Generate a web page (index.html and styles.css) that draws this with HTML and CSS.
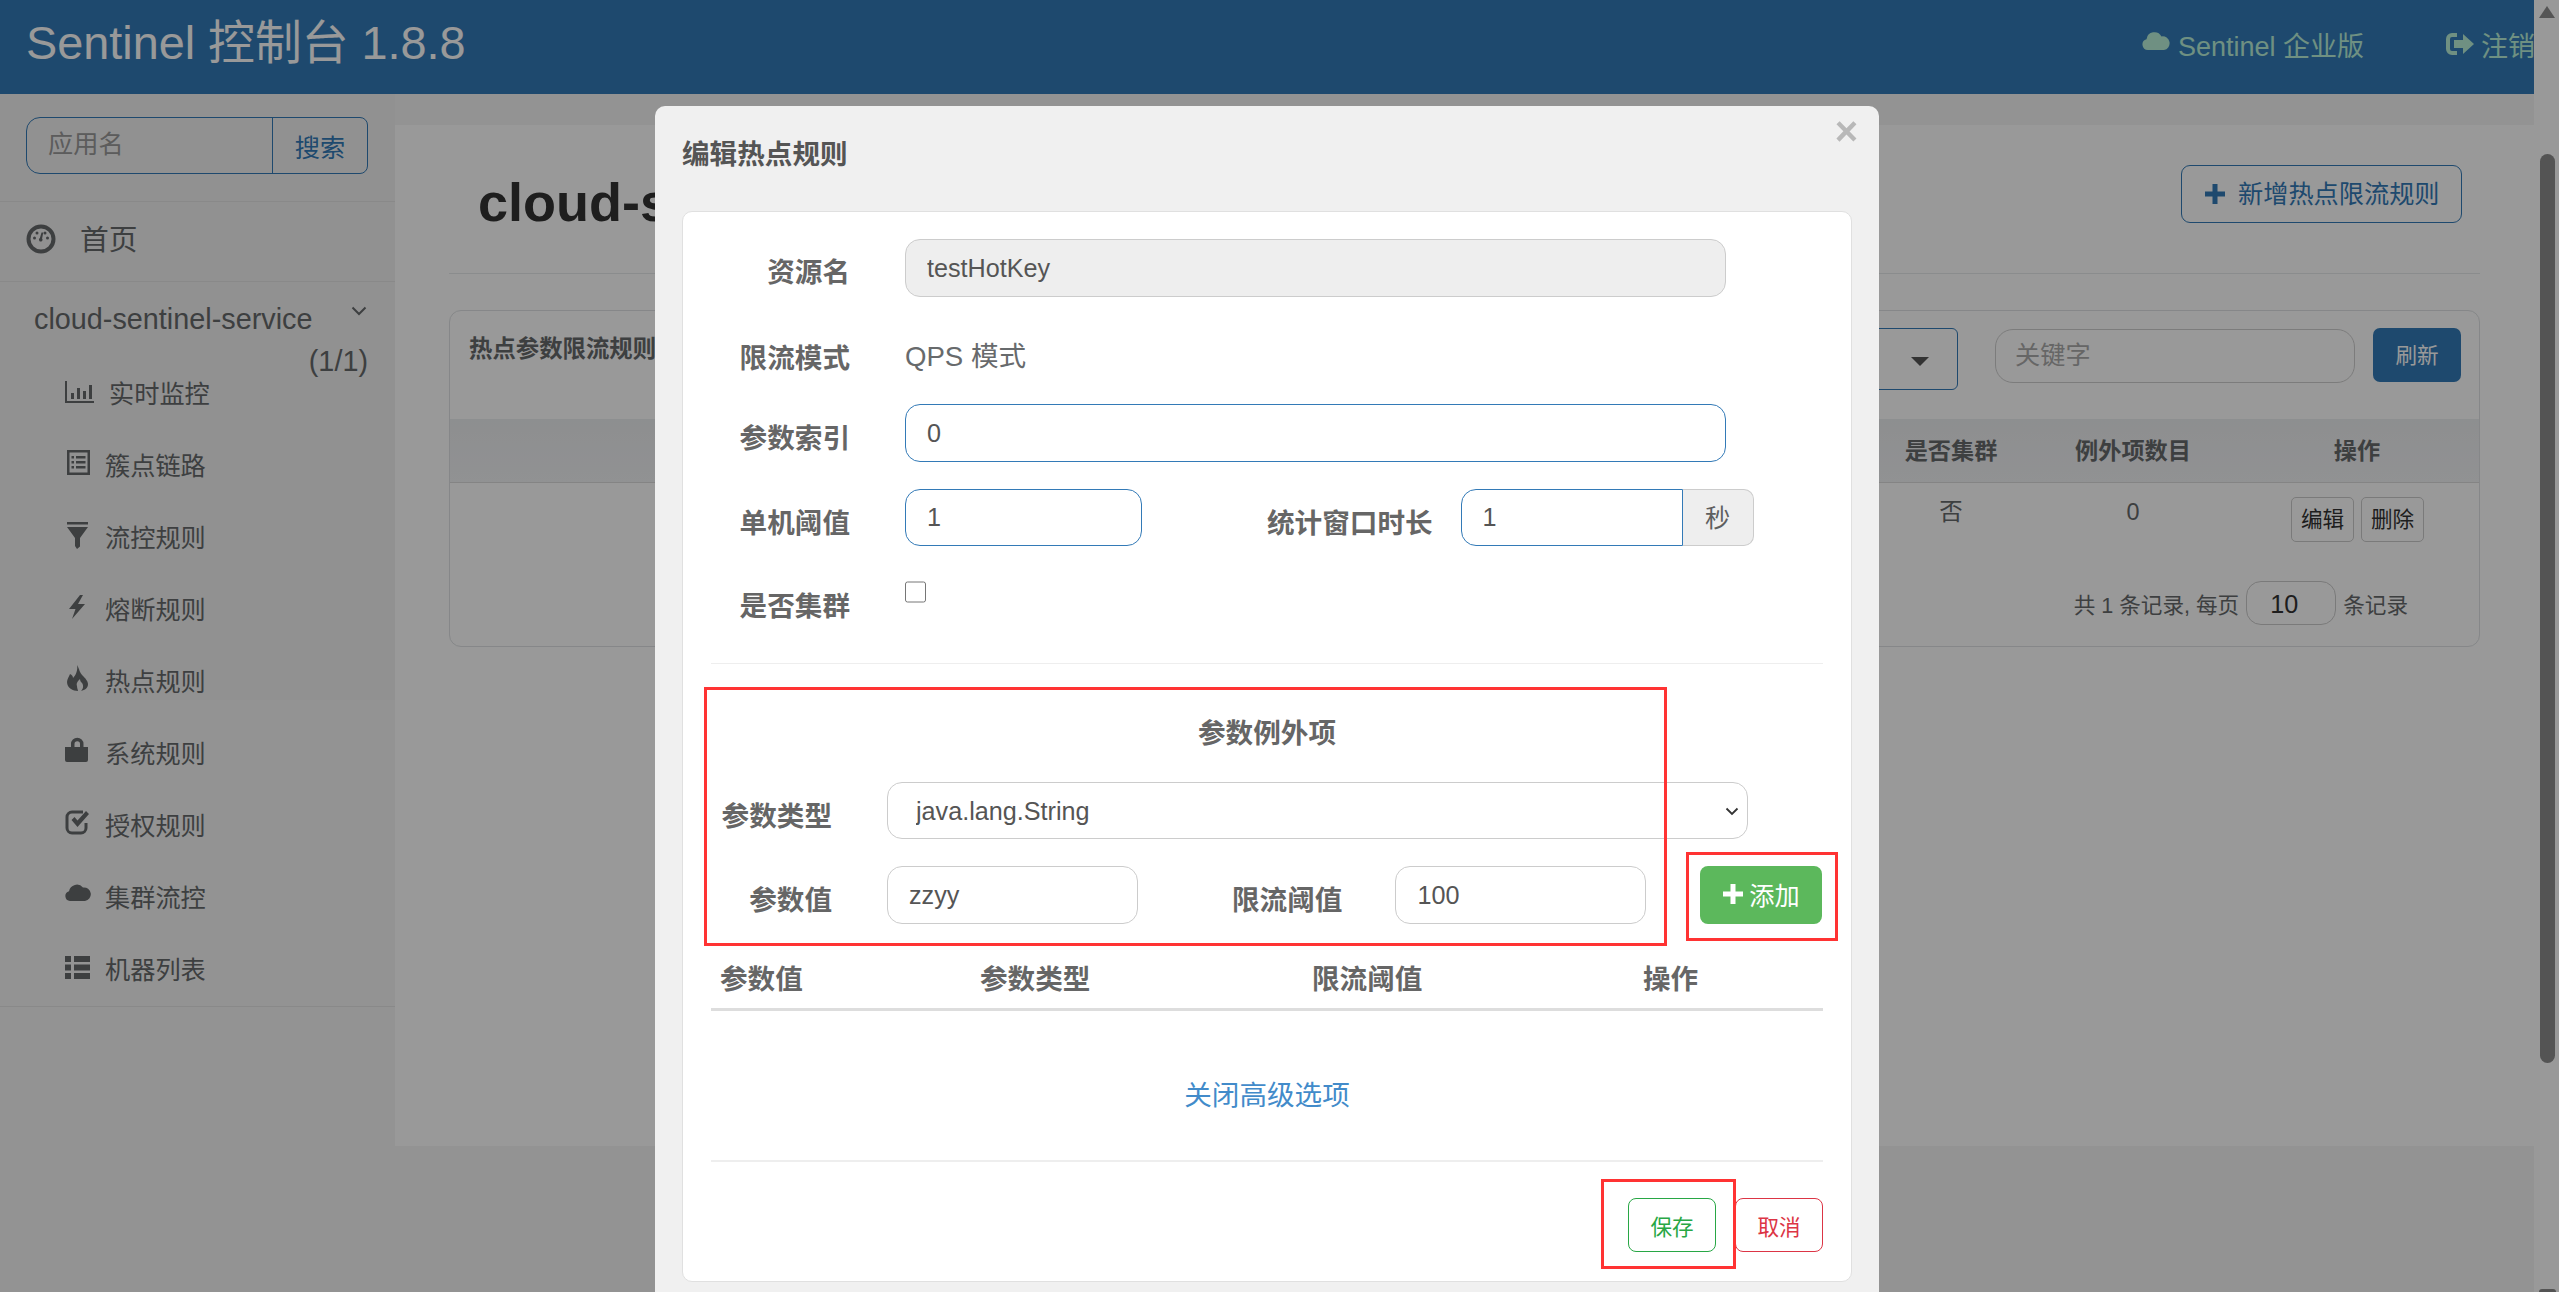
FILE: index.html
```html
<!DOCTYPE html>
<html lang="zh-CN">
<head>
<meta charset="utf-8">
<title>Sentinel 控制台</title>
<link rel="stylesheet" href="styles.css">
</head>
<body>
<div class="app">
  <div class="page">
    <header class="navbar">
      <div class="brand">Sentinel 控制台 1.8.8</div>
      <nav class="nav-right">
        <a class="nav-link"><svg class="nav-cloud" viewBox="0 0 28 18"><path d="M6 18a5.500 5.500 0 0 1-1.500-10.800A8 8 0 0 1 19.500 4.500 6.800 6.800 0 0 1 22 18Z"/></svg>Sentinel 企业版</a>
        <a class="nav-link nav-logout"><svg class="nav-out" viewBox="0 0 30 24"><path d="M12 1H7a6 6 0 0 0-6 6v10a6 6 0 0 0 6 6h5v-4H7a2 2 0 0 1-2-2V7a2 2 0 0 1 2-2h5Z"/><path d="M9 8h9V2l11 10-11 10v-6H9Z"/></svg><span class="clip">注销</span></a>
      </nav>
    </header>
    <div class="layout">
      <aside class="sidebar">
        <div class="search-wrap">
          <div class="search-group">
            <input class="search-input" placeholder="应用名">
            <span class="search-btn">搜索</span>
          </div>
        </div>
        <div class="home-row">
          <svg class="home-icon" viewBox="0 0 30 30"><circle cx="15" cy="15" r="12.500" fill="none" stroke-width="4"/><circle cx="8.500" cy="14" r="1.500"/><circle cx="11" cy="9" r="1.500"/><circle cx="19" cy="9" r="1.500"/><circle cx="21.500" cy="14" r="1.500"/><path d="M15.500 8.500l1.800 0-1.200 6a1.800 1.800 0 1 1-2.200-.4Z"/></svg>
          <span>首页</span>
        </div>
        <div class="service">
          <div class="service-head">
            <span class="service-name">cloud-sentinel-service</span>
            <svg class="chevron" viewBox="0 0 16 10"><path d="M1.500 1.500L8 8l6.500-6.500" fill="none" stroke-width="2"/></svg>
            <span class="service-count">(1/1)</span>
          </div>
          <ul class="menu">
            <li class="menu-item"><svg class="ic ic-wide" viewBox="0 0 44 30"><path d="M0 4h2v20h27v2H0Z"/><path d="M6 16h3v6H6ZM12 11h3v11h-3ZM18 14h3v8h-3ZM24 8h3v14h-3Z"/></svg>实时监控</li>
            <li class="menu-item"><svg class="ic" viewBox="0 0 40 30"><path fill-rule="evenodd" d="M2 1h23v25H2ZM4.500 3.500v20h18v-20Z"/><path d="M6.500 7h2.500v2.500H6.500ZM11 7h9.500v2.500H11ZM6.500 12h2.500v2.500H6.500ZM11 12h9.500v2.500H11ZM6.500 17h2.500v2.500H6.500ZM11 17h9.500v2.500H11Z"/></svg>簇点链路</li>
            <li class="menu-item"><svg class="ic" viewBox="0 0 40 30"><path d="M2 1h21v2.500H2ZM2 6h21l-8 11v8.500l-3 2.500-2-3V17Z"/></svg>流控规则</li>
            <li class="menu-item"><svg class="ic" viewBox="0 0 40 30"><path d="M15 2L4 16h6.500L7 26 20 11h-7L18 2Z"/></svg>熔断规则</li>
            <li class="menu-item"><svg class="ic" viewBox="0 0 40 30"><path fill-rule="evenodd" d="M12 0c3 5 2 7 6 11 2 2 5 5 5 8 0 4-3 6-7 7 2-2 3-5 1-8-1-1-2-2-2-4-2 2-4 4-3 7 0 2 1 4 1 5-5 0-11-3-11-9 0-3 2-5 3-8 2 1 3 2 3 4 3-3 5-8 4-13Z"/></svg>热点规则</li>
            <li class="menu-item"><svg class="ic" viewBox="0 0 40 30"><path fill-rule="evenodd" d="M6 10V7a6 6 0 0 1 12.500 0v3H23v13a2 2 0 0 1-2 2H2a2 2 0 0 1-2-2V10ZM9.500 10h5.500V7a2.700 2.700 0 0 0-5.500 0Z"/></svg>系统规则</li>
            <li class="menu-item"><svg class="ic" viewBox="0 0 40 30"><path fill="none" stroke-width="3" d="M18 3H7a5 5 0 0 0-5 5v11a5 5 0 0 0 5 5h9a5 5 0 0 0 5-5v-5"/><path d="M6.500 11l3-3 3 3.500L21 2l3 3-11.500 13Z"/></svg>授权规则</li>
            <li class="menu-item"><svg class="ic" viewBox="0 0 40 30"><path d="M5 20a5 5 0 0 1-1-9.800A8 8 0 0 1 18 6.500 6.500 6.500 0 0 1 20 20Z"/></svg>集群流控</li>
            <li class="menu-item"><svg class="ic" viewBox="0 0 40 30"><path d="M0 3h6v6H0ZM9 3h16v6H9ZM0 11.500h6v6H0ZM9 11.500h16v6H9ZM0 20h6v6H0ZM9 20h16v6H9Z"/></svg>机器列表</li>
          </ul>
        </div>
      </aside>
      <main class="main">
        <div class="page-head">
          <h1 class="page-title">cloud-sentinel-service</h1>
          <a class="btn-outline"><svg class="plus" viewBox="0 0 20 20"><path d="M7.500 0h5v7.500H20v5h-7.500V20h-5v-7.500H0v-5h7.500Z"/></svg>新增热点限流规则</a>
        </div>
        <section class="panel">
          <div class="panel-head">
            <strong class="panel-title">热点参数限流规则</strong>
            <div class="machine-select"><i class="caret"></i></div>
            <input class="keyword" placeholder="关键字">
            <a class="btn-refresh">刷新</a>
          </div>
          <div class="tbl-head">
            <span></span><span>是否集群</span><span>例外项数目</span><span>操作</span>
          </div>
          <div class="tbl-row">
            <span></span><span>否</span><span>0</span>
            <span class="tbl-actions"><a class="btn-mini">编辑</a><a class="btn-mini">删除</a></span>
          </div>
          <div class="pager">共 1 条记录, 每页<input class="pager-input" value="10">条记录</div>
        </section>
      </main>
    </div>
  </div>
  <div class="scrollbar">
    <i class="sb-up"></i>
    <i class="sb-thumb"></i>
    <i class="sb-end"></i>
  </div>
</div>

<div class="backdrop"></div>

<div class="modal">
  <button class="close">×</button>
  <h3 class="modal-title">编辑热点规则</h3>
  <div class="dialog-card">
    <div class="row row-res">
      <label class="lbl">资源名</label>
      <input class="field field-full field-off" value="testHotKey" disabled>
    </div>
    <div class="row row-mode">
      <label class="lbl">限流模式</label>
      <span class="static">QPS 模式</span>
    </div>
    <div class="row row-index">
      <label class="lbl">参数索引</label>
      <input class="field field-full field-on" value="0">
    </div>
    <div class="row row-thresh">
      <label class="lbl">单机阈值</label>
      <input class="field field-short field-on" value="1">
      <label class="lbl lbl-window">统计窗口时长</label>
      <input class="field field-addon field-on" value="1"><span class="addon">秒</span>
    </div>
    <div class="row row-cluster">
      <label class="lbl">是否集群</label>
      <input class="check" type="checkbox">
    </div>
    <hr class="rule">
    <div class="exc-title">参数例外项</div>
    <div class="exc-row exc-type">
      <label class="lbl lbl-exc">参数类型</label>
      <div class="select-box">
        <select class="exc-select"><option>java.lang.String</option></select>
        <svg class="select-arrow" viewBox="0 0 14 9"><path d="M1.500 1.500L7 7l5.500-5.500" fill="none" stroke-width="1.800"/></svg>
      </div>
    </div>
    <div class="exc-row exc-vals">
      <label class="lbl lbl-exc">参数值</label>
      <input class="field field-exc" value="zzyy">
      <label class="lbl lbl-limit">限流阈值</label>
      <input class="field field-exc" value="100">
      <button class="btn-add"><svg class="plus-add" viewBox="0 0 20 20"><path d="M7.500 0h5v7.500H20v5h-7.500V20h-5v-7.500H0v-5h7.500Z"/></svg>添加</button>
    </div>
    <div class="exc-table">
      <span class="col-a">参数值</span><span class="col-b">参数类型</span><span class="col-c">限流阈值</span><span class="col-d">操作</span>
    </div>
    <div class="adv"><a class="adv-link">关闭高级选项</a></div>
    <div class="foot">
      <button class="btn-save">保存</button>
      <button class="btn-cancel">取消</button>
    </div>
  </div>
  <i class="mark mark-form"></i>
  <i class="mark mark-add"></i>
  <i class="mark mark-save"></i>
</div>
</body>
</html>
```
FILE: styles.css
```css
* { box-sizing: border-box; }
html, body { margin: 0; height: 100%; overflow: hidden; }
body {
  font-family: "Liberation Sans", "Noto Sans CJK SC", sans-serif;
  font-size: 25.2px;
  color: #676a6c;
  background: #fff;
}
input, select, button { font-family: inherit; }
svg { fill: currentColor; stroke: currentColor; stroke-width: 0; flex: none; }
a { display: inline-block; }

.app { display: flex; height: 1292px; }
.page { width: 2534px; display: flex; flex-direction: column; }

/* navbar */
.navbar { height: 94px; flex: none; background: #337ab7; display: flex; align-items: center; justify-content: space-between; overflow: hidden; }
.brand { padding-left: 26px; font-size: 46.800px; line-height: 84px; color: #fff; margin-bottom: 8px; }
.nav-right { display: flex; align-items: center; color: #b9f0d9; font-size: 27px; margin-bottom: 6px; }
.nav-link { display: flex; align-items: center; }
.nav-cloud { width: 28px; height: 18px; margin-right: 8px; margin-top: -6px; }
.nav-logout { margin-left: 81px; width: 89px; white-space: nowrap; overflow: hidden; }
.nav-out { width: 30px; height: 24px; margin-right: 6px; }
.clip { display: block; }

/* layout */
.layout { flex: 1; display: flex; background: #f6f6f6; }
.sidebar { width: 395px; flex: none; background: linear-gradient(#f2f2f2 606px, #f6f6f6 606px); }
.search-wrap { padding: 23px 26px 27px; height: 108px; border-bottom: 1px solid #e5e5e5; }
.search-group { width: 342px; height: 57px; display: flex; border: 1px solid #337ab7; border-radius: 14px 8px 8px 14px; }
.search-input { width: 245px; border: 0; background: none; outline: 0; padding: 0 0 2px 21px; font-size: 25.2px; color: #555; }
.search-input::placeholder { color: #999; }
.search-btn { flex: 1; border-left: 1px solid #337ab7; color: #337ab7; display: flex; align-items: center; justify-content: center; }
.home-row { height: 80px; display: flex; align-items: center; padding-left: 26px; font-size: 28.8px; border-bottom: 1px solid #e5e5e5; }
.home-row span { margin-left: 24px; padding-bottom: 8px; }
.home-icon { width: 30px; height: 30px; margin-top: -6px; }
.service { padding-top: 16px; border-bottom: 1px solid #e5e5e5; }
.service-head { position: relative; height: 58.400px; padding-left: 34px; font-size: 28.8px; line-height: 43px; }
.chevron { position: absolute; left: 351px; top: 8px; width: 16px; height: 10px; fill: none; }
.service-count { position: absolute; right: 27px; top: 42px; }
.menu { list-style: none; margin: 0; padding: 0 0 2px; }
.menu-item { height: 72px; display: flex; align-items: center; padding-left: 65px; }
.ic { width: 40px; height: 30px; }
.ic-wide { width: 44px; }

/* main */
.main { flex: 1; margin-top: 31px; height: 1021px; background: #fff; padding: 0 54px; }
.page-head { height: 149px; position: relative; border-bottom: 1px solid #e7eaec; display: flex; justify-content: space-between; }
.page-title { margin: 46px 0 0; padding-left: 29px; font-size: 54px; line-height: 62px; font-weight: 700; color: #333; }
.btn-outline { margin: 40px 18px 0 0; width: 281px; height: 58px; border: 1px solid #337ab7; border-radius: 9px; color: #337ab7; display: flex; align-items: center; padding: 0 0 4px 23px; }
.plus { width: 20px; height: 20px; margin-right: 13px; margin-top: 4px; }
.panel { margin-top: 36px; height: 337px; border: 1px solid #dfe2e4; border-radius: 12px; }
.panel-head { height: 108px; display: flex; align-items: flex-start; padding: 17px 18px 0 19px; position: relative; }
.panel-title { margin: 2px auto 0 0; font-size: 23.400px; color: #676a6c; }
.machine-select { width: 320px; height: 62px; border: 1px solid #337ab7; border-radius: 6px; display: flex; align-items: center; justify-content: flex-end; padding-right: 28px; }
.caret { border-top: 9px solid #555; border-left: 9px solid transparent; border-right: 9px solid transparent; margin-top: 4px; }
.keyword { margin: 1px 0 0 37px; width: 360px; height: 54px; border: 1px solid #cfcfcf; border-radius: 18px; padding: 0 19px 2px; font-size: 25.2px; background: none; outline: 0; }
.keyword::placeholder { color: #aaa; }
.btn-refresh { margin-left: 18px; width: 88px; height: 54px; border-radius: 7px; background: #337ab7; color: #fff; font-size: 21.600px; display: flex; align-items: center; justify-content: center; padding-bottom: 4px; }
.tbl-head, .tbl-row { display: grid; grid-template-columns: 1fr 160px 204px 244px; text-align: center; }
.tbl-head { height: 64px; align-items: center; background: linear-gradient(#eceef0, #f2f3f5); border-bottom: 1px solid #ddd; font-size: 23.200px; font-weight: 700; padding-bottom: 4px; }
.tbl-row { height: 100px; padding-top: 14px; font-size: 23.400px; line-height: 30px; }
.tbl-actions { display: flex; gap: 7px; justify-content: center; padding-left: 1px; }
.btn-mini { width: 63px; height: 45px; margin-top: 0; border: 1px solid #ccc; border-radius: 5px; font-size: 21.600px; color: #333; display: flex; align-items: center; justify-content: center; }
.pager { display: flex; align-items: center; justify-content: flex-end; padding-right: 71px; margin-top: -2px; font-size: 21.600px; gap: 7px; }
.pager-input { width: 90px; height: 44px; border: 1px solid #ccc; border-radius: 15px; padding: 2px 0 0 23px; font-size: 25.2px; color: #333; background: none; outline: 0; }

/* scrollbar */
.scrollbar { width: 25px; position: relative; background: #fff; }
.sb-up { position: absolute; left: 5px; top: 6px; border-bottom: 12px solid #8e8e8e; border-left: 8px solid transparent; border-right: 8px solid transparent; }
.sb-thumb { position: absolute; left: 6px; top: 154px; width: 15px; height: 909px; border-radius: 8px; background: #8c8c8c; }
.sb-end { position: absolute; left: 5px; top: 1289px; width: 17px; height: 3px; border-radius: 3px 3px 0 0; background: #8c8c8c; }

.backdrop { position: fixed; inset: 0; background: rgba(0, 0, 0, .4); }

/* modal */
.modal { position: absolute; left: 655px; top: 106px; width: 1224px; height: 1220px; background: #f0f0f0; border-radius: 10px; padding: 0 27px; color: #5f5f5f; }
.close { position: absolute; right: 21px; top: 2px; border: 0; background: none; font-size: 40px; line-height: 46px; font-weight: 700; color: #b8b8b8; padding: 0; }
.modal-title { margin: 0; height: 105px; padding-top: 29px; font-size: 27.6px; line-height: 40px; font-weight: 700; color: #555; }
.dialog-card { height: 1071px; background: #fff; border: 1px solid #e0e0e0; border-radius: 10px; padding: 1px 28px; }
.row { display: flex; align-items: center; margin-left: -28px; }
.row > * { flex: none; }
.lbl { font-weight: 700; font-size: 27.6px; color: #666; padding-top: 6px; white-space: nowrap; flex: none; }
.row > .lbl:first-child { width: 167px; margin-right: 55px; text-align: right; }
.row-res { margin-top: 26px; height: 58px; }
.row-res .lbl, .row-mode .lbl { padding-top: 4px; }
.row-mode { margin-top: 28px; height: 58px; }
.row-index { margin-top: 21px; height: 58px; }
.row-thresh { margin-top: 27px; height: 57px; }
.row-cluster { margin-top: 26px; height: 58px; align-items: flex-start; }
.row-cluster .lbl { padding-top: 12px; }
.static { font-size: 27.6px; color: #676a6c; }
.field { height: 100%; border: 1px solid #ccc; border-radius: 15px; padding: 0 21px; font-size: 25.2px; color: #555; background: #fff; outline: 0; flex: none; }
.field-full { width: 821px; }
.field-off { background: #eee; color: #555; }
.field-on { border-color: #337ab7; }
.field-short { width: 237px; }
.lbl-window { margin-left: 125px; margin-right: 28px; }
.field-addon { width: 222px; border-radius: 15px 0 0 15px; }
.addon { width: 71px; height: 100%; background: #eee; border: 1px solid #ccc; border-left: 0; border-radius: 0 10px 10px 0; display: flex; align-items: center; justify-content: center; padding-bottom: 4px; font-size: 25.2px; }
.check { width: 21px; height: 22px; margin: 9px 0 0; }
.rule { margin: 33px 0 0; border: 0; border-top: 1px solid #eee; }
.exc-title { margin-top: 50px; height: 40px; text-align: center; font-size: 27.6px; font-weight: 700; color: #666; line-height: 40px; }
.exc-row { display: flex; align-items: center; margin-left: -28px; }
.lbl-exc { width: 149px; margin-right: 55px; text-align: right; }
.exc-type { margin-top: 28px; height: 57px; }
.select-box { position: relative; flex: none; width: 861px; height: 57px; }
.exc-select { appearance: none; width: 100%; height: 100%; border: 1px solid #ccc; border-radius: 15px; padding: 0 28px; background: #fff; font-size: 25.2px; color: #555; outline: 0; }
.select-arrow { position: absolute; right: 9px; top: 25px; width: 14px; height: 9px; fill: none; color: #333; pointer-events: none; }
.exc-vals { margin-top: 27px; height: 58px; }
.field-exc { width: 251px; }
.lbl-limit { margin-left: 94px; margin-right: 53px; }
.btn-add { flex: none; margin-left: 54px; width: 122px; height: 100%; border: 0; border-radius: 8px; background: #5cb85c; color: #fff; font-size: 25.2px; display: flex; align-items: center; justify-content: center; padding: 0 0 2px; }
.plus-add { width: 20px; height: 20px; margin-right: 6px; }
.exc-table { height: 87px; border-bottom: 3px solid #ddd; font-size: 27.6px; font-weight: 700; color: #666; display: grid; grid-template-columns: 260px 332px 331px 1fr; padding: 0 0 8px 9px; align-items: end; line-height: 40px; }
.adv { height: 151px; border-bottom: 2px solid #eee; text-align: center; padding-top: 65px; }
.adv-link { font-size: 27.6px; line-height: 40px; color: #428bca; }
.foot { display: flex; justify-content: flex-end; gap: 19px; margin-top: 36px; }
.btn-save, .btn-cancel { width: 88px; height: 54px; border-radius: 8px; background: #fff; font-size: 21.600px; padding: 0; }
.btn-save { border: 1px solid #28a745; color: #28a745; }
.btn-cancel { border: 1px solid #dc3545; color: #dc3545; }

/* annotation marks drawn over the dialog */
.mark { position: absolute; border: 3px solid #f33; pointer-events: none; }
.mark-form { left: 49px; top: 581px; width: 963px; height: 259px; }
.mark-add { left: 1031px; top: 746px; width: 152px; height: 89px; }
.mark-save { left: 946px; top: 1073px; width: 135px; height: 90px; }
```
